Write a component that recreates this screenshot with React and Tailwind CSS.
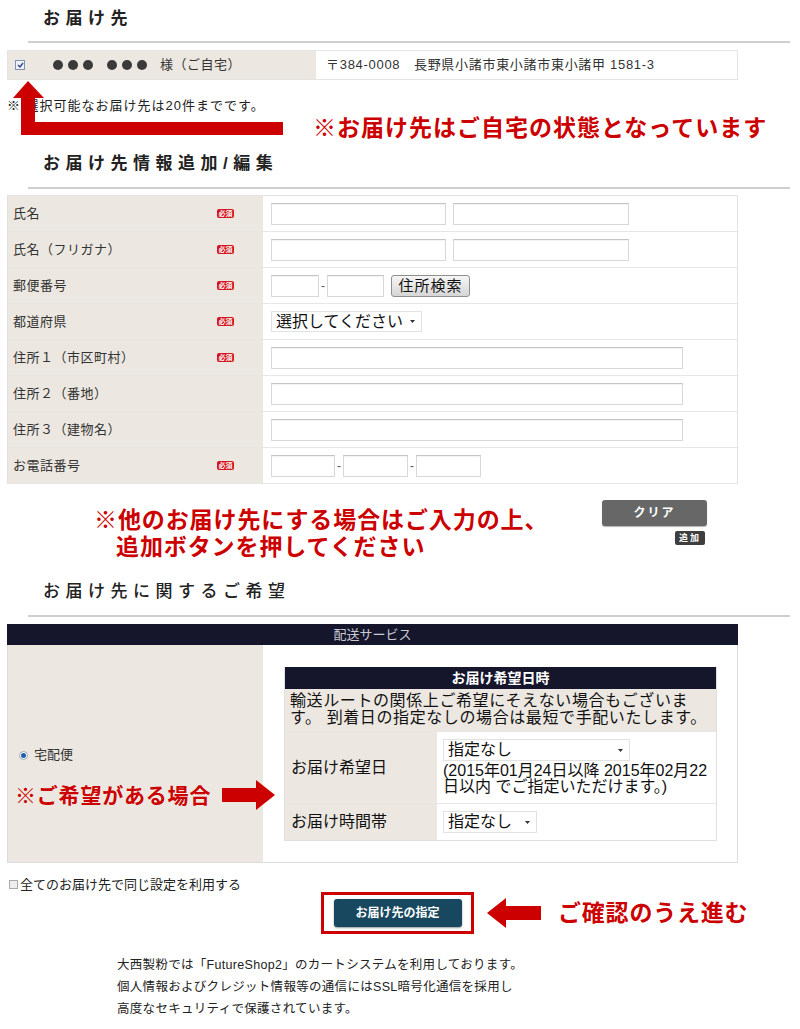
import React from "react";

const BEIGE = "bg-[#ece8e1]";

function SectionTitle({ children, boxClass, textClass = "font-bold" }) {
  return (
    <div>
      <div className={`flex items-center pl-[43px] text-[17px] tracking-[5.5px] text-[#222] ${boxClass} ${textClass}`}>
        {children}
      </div>
      <div className="ml-[28px] w-[762px] h-[2px] bg-[#cfcfcf]" />
    </div>
  );
}

function Required() {
  return (
    <span className="inline-flex items-center justify-center w-[17px] h-[9px] rounded-[2px] bg-[#d3141b] text-white text-[7px] leading-none font-bold">
      必須
    </span>
  );
}

function TextBox({ w }) {
  return (
    <div
      className="h-[22px] bg-white border border-[#d8d8d8] border-t-[#c4c4c4] shadow-[inset_0_1px_1px_rgba(0,0,0,0.05)]"
      style={{ width: w }}
    />
  );
}

function Dash() {
  return <span className="w-[8px] text-center text-[12px] text-[#555] leading-none">-</span>;
}

function SelectBox({ w, label, h = "h-[22px]", text = "text-[16px]" }) {
  return (
    <div
      className={`flex items-center justify-between bg-white border border-[#e2e2e2] pl-[4px] pr-[6px] ${h} ${text} text-[#111]`}
      style={{ width: w }}
    >
      <span>{label}</span>
      <svg width="5" height="3" viewBox="0 0 5 3">
        <path d="M0 0h5L2.5 3z" fill="#333" />
      </svg>
    </div>
  );
}

function Dots() {
  return (
    <span className="flex gap-[5px]">
      {[0, 1, 2].map((i) => (
        <span key={i} className="w-[10px] h-[10px] rounded-full bg-[#3a3a3a]" />
      ))}
    </span>
  );
}

const FORM_ROWS = [
  { label: "氏名", req: true, kind: "name" },
  { label: "氏名（フリガナ）", req: true, kind: "name" },
  { label: "郵便番号", req: true, kind: "zip" },
  { label: "都道府県", req: true, kind: "pref" },
  { label: "住所１（市区町村）", req: true, kind: "addr" },
  { label: "住所２（番地）", req: false, kind: "addr" },
  { label: "住所３（建物名）", req: false, kind: "addr" },
  { label: "お電話番号", req: true, kind: "tel" },
];

function FieldInputs({ kind }) {
  if (kind === "name")
    return (
      <div className="flex gap-[7px]">
        <TextBox w={175} />
        <TextBox w={176} />
      </div>
    );
  if (kind === "zip")
    return (
      <div className="flex items-center">
        <TextBox w={48} />
        <Dash />
        <TextBox w={57} />
        <button className="ml-[7px] w-[79px] h-[22px] rounded-[3px] border border-[#8f8f8f] bg-gradient-to-b from-[#f6f6f6] to-[#d6d6d6] text-[15px] leading-none text-[#111] tracking-[1px]">
          住所検索
        </button>
      </div>
    );
  if (kind === "pref") return <SelectBox w={151} label="選択してください" h="h-[21px]" />;
  if (kind === "addr") return <TextBox w={412} />;
  return (
    <div className="flex items-center">
      <TextBox w={64} />
      <Dash />
      <TextBox w={65} />
      <Dash />
      <TextBox w={65} />
    </div>
  );
}

function ArrowUpRight() {
  // L-shaped arrow: bar along the bottom, shaft up to the checkbox
  return (
    <svg className="absolute left-[13px] top-[81px]" width="272" height="56" viewBox="0 0 272 56">
      <path d="M15 0 L31 17 L22 17 L22 41 L270 41 L270 54 L8 54 L8 17 L0 17 Z" fill="#cc0000" />
    </svg>
  );
}

function ArrowRight() {
  return (
    <svg className="relative z-10" width="53" height="30" viewBox="0 0 53 30">
      <path d="M0 8 H34 V0 L53 15 L34 30 V22 H0 Z" fill="#cc0000" />
    </svg>
  );
}

function ArrowLeft() {
  return (
    <svg width="54" height="30" viewBox="0 0 54 30">
      <path d="M54 8 H19 V0 L0 15 L19 30 V22 H54 Z" fill="#cc0000" />
    </svg>
  );
}

export default function App() {
  return (
    <div className="relative w-[800px] h-[1029px] bg-white overflow-hidden text-[#333] font-['Liberation_Sans','Noto_Sans_CJK_JP',sans-serif]">
      {/* お届け先 */}
      <SectionTitle boxClass="h-[41px] pb-[4px]">お届け先</SectionTitle>

      <div className="mt-[7px] ml-[7px] w-[731px] h-[30px] flex border border-[#e4e4e4] text-[13px]">
        <div className={`w-[308px] flex items-center ${BEIGE}`}>
          <span className="ml-[7px] w-[10px] h-[10px] border border-[#7d93b3] bg-[#eef2f8] flex items-center justify-center">
            <svg width="7" height="6" viewBox="0 0 7 6">
              <path d="M1 3 L3 5 L6 1" stroke="#27408b" strokeWidth="1.3" fill="none" />
            </svg>
          </span>
          <span className="ml-[28px] flex gap-[14px]">
            <Dots />
            <Dots />
          </span>
          <span className="ml-[13px] tracking-[0.5px]">様（ご自宅）</span>
        </div>
        <div className="flex items-center pl-[10px] bg-white flex-1 tracking-[0.7px]">
          〒384-0008　長野県小諸市東小諸市東小諸甲 1581-3
        </div>
      </div>

      <p className="mt-[17px] pl-[7px] text-[13px] leading-[18px] tracking-[1px] text-[#222]">※ 選択可能なお届け先は20件までです。</p>
      <p className="pl-[313px] text-[23px] leading-[26px] font-bold text-[#cc0000] tracking-[1px]">
        ※お届け先はご自宅の状態となっています
      </p>
      <ArrowUpRight />

      {/* お届け先情報追加/編集 */}
      <SectionTitle boxClass="h-[46px]">お届け先情報追加/編集</SectionTitle>

      <div className="mt-[6px] ml-[7px] w-[731px] border border-[#e2e2e2] border-b-0 text-[13px]">
        {FORM_ROWS.map((row) => (
          <div key={row.label} className="flex h-[36px] border-b border-[#e6e6e6]">
            <div className={`w-[255px] flex items-center justify-between pl-[5px] pr-[29px] ${BEIGE}`}>
              <span className="tracking-[0.5px]">{row.label}</span>
              {row.req && <Required />}
            </div>
            <div className="flex-1 flex items-center pl-[8px] bg-white">
              <FieldInputs kind={row.kind} />
            </div>
          </div>
        ))}
      </div>

      <div className="flex">
        <div className="w-[602px] pl-[94px] mt-[23px] text-[23px] leading-[27px] font-bold text-[#cc0000] tracking-[0.9px]">
          <p>※他のお届け先にする場合はご入力の上、</p>
          <p className="pl-[22px]">追加ボタンを押してください</p>
        </div>
        <div className="mt-[16px]">
          <button className="w-[105px] h-[26px] rounded-[3px] bg-[#676767] text-white text-[12px] font-bold tracking-[2px] shadow-[0_1px_1px_rgba(0,0,0,0.3)]">
            クリア
          </button>
          <div className="mt-[5px] ml-[73px] w-[30px] h-[14px] rounded-[2px] bg-[#3e3e3e] text-white text-[9px] font-bold leading-[14px] text-center tracking-[2px]">
            追加
          </div>
        </div>
      </div>

      {/* お届け先に関するご希望 */}
      <SectionTitle boxClass="h-[54px] pt-[8px]" textClass="font-medium">
        お届け先に関するご希望
      </SectionTitle>

      <div className="mt-[7px] ml-[7px] w-[731px]">
        <div className="h-[21px] bg-[#15152b] text-[#c9c9d2] text-[13px] flex items-center justify-center">
          配送サービス
        </div>
        <div className="flex h-[218px] border border-t-0 border-[#dcdcdc]">
          <div className={`w-[255px] shrink-0 pt-[102px] pl-[11px] ${BEIGE}`}>
            <div className="flex items-center h-[16px] text-[13px]">
              <span className="w-[9px] h-[9px] rounded-full border border-[#9aa8b8] bg-white flex items-center justify-center">
                <span className="w-[5px] h-[5px] rounded-full bg-[#1f5ea8]" />
              </span>
              <span className="ml-[6px]">宅配便</span>
            </div>
            <div className="mt-[17px] -ml-[4px] flex items-center h-[30px] whitespace-nowrap">
              <span className="shrink-0 text-[21px] font-bold text-[#cc0000] tracking-[0.8px] leading-none">
                ※ご希望がある場合
              </span>
              <span className="shrink-0 ml-[11px]">
                <ArrowRight />
              </span>
            </div>
          </div>

          <div className="flex-1 bg-white pl-[21px] pt-[22px]">
            <div className="w-[433px] border border-[#e0e0e0] border-t-0 text-[16px] text-[#111]">
              <div className="h-[22px] bg-[#15152b] text-white text-[14px] font-bold flex items-center justify-center">
                お届け希望日時
              </div>
              <div className={`h-[42px] px-[5px] pt-[3px] leading-[17px] tracking-[0.6px] ${BEIGE}`}>
                輸送ルートの関係上ご希望にそえない場合もございま
                <br />
                す。 到着日の指定なしの場合は最短で手配いたします。
              </div>
              <div className="flex h-[72px] border-t border-[#e6e6e6]">
                <div className={`w-[152px] flex items-center pl-[6px] ${BEIGE}`}>お届け希望日</div>
                <div className="flex-1 px-[6px] pt-[7px] leading-[16px]">
                  <SelectBox w={187} label="指定なし" />
                  <p className="mt-[2px]">
                    (2015年01月24日以降 2015年02月22
                    <br />
                    日以内 でご指定いただけます。)
                  </p>
                </div>
              </div>
              <div className="flex h-[37px] border-t border-[#e6e6e6]">
                <div className={`w-[152px] flex items-center pl-[6px] ${BEIGE}`}>お届け時間帯</div>
                <div className="flex-1 flex items-center px-[6px]">
                  <SelectBox w={94} label="指定なし" />
                </div>
              </div>
            </div>
          </div>
        </div>
      </div>

      <div className="mt-[14px] pl-[9px] flex items-center h-[15px] text-[13px] text-[#222]">
        <span className="w-[9px] h-[9px] border border-[#aaa] bg-[#eee]" />
        <span className="ml-[2px]">全てのお届け先で同じ設定を利用する</span>
      </div>

      <div className="flex items-center h-[42px]">
        <div className="ml-[321px] w-[153px] h-[42px] border-[3px] border-[#cc0000] flex items-center justify-center">
          <button className="w-[128px] h-[28px] rounded-[3px] bg-[#17485f] text-white text-[12px] font-bold shadow-[0_1px_2px_rgba(0,0,0,0.4)]">
            お届け先の指定
          </button>
        </div>
        <div className="ml-[13px]">
          <ArrowLeft />
        </div>
        <span className="ml-[17px] text-[23px] font-bold text-[#cc0000] tracking-[0.8px]">ご確認のうえ進む</span>
      </div>

      <div className="mt-[20px] pl-[117px] text-[12.5px] leading-[22px] tracking-[0.3px] text-[#222]">
        <p>大西製粉では「FutureShop2」のカートシステムを利用しております。</p>
        <p>個人情報およびクレジット情報等の通信にはSSL暗号化通信を採用し</p>
        <p>高度なセキュリティで保護されています。</p>
      </div>
    </div>
  );
}
